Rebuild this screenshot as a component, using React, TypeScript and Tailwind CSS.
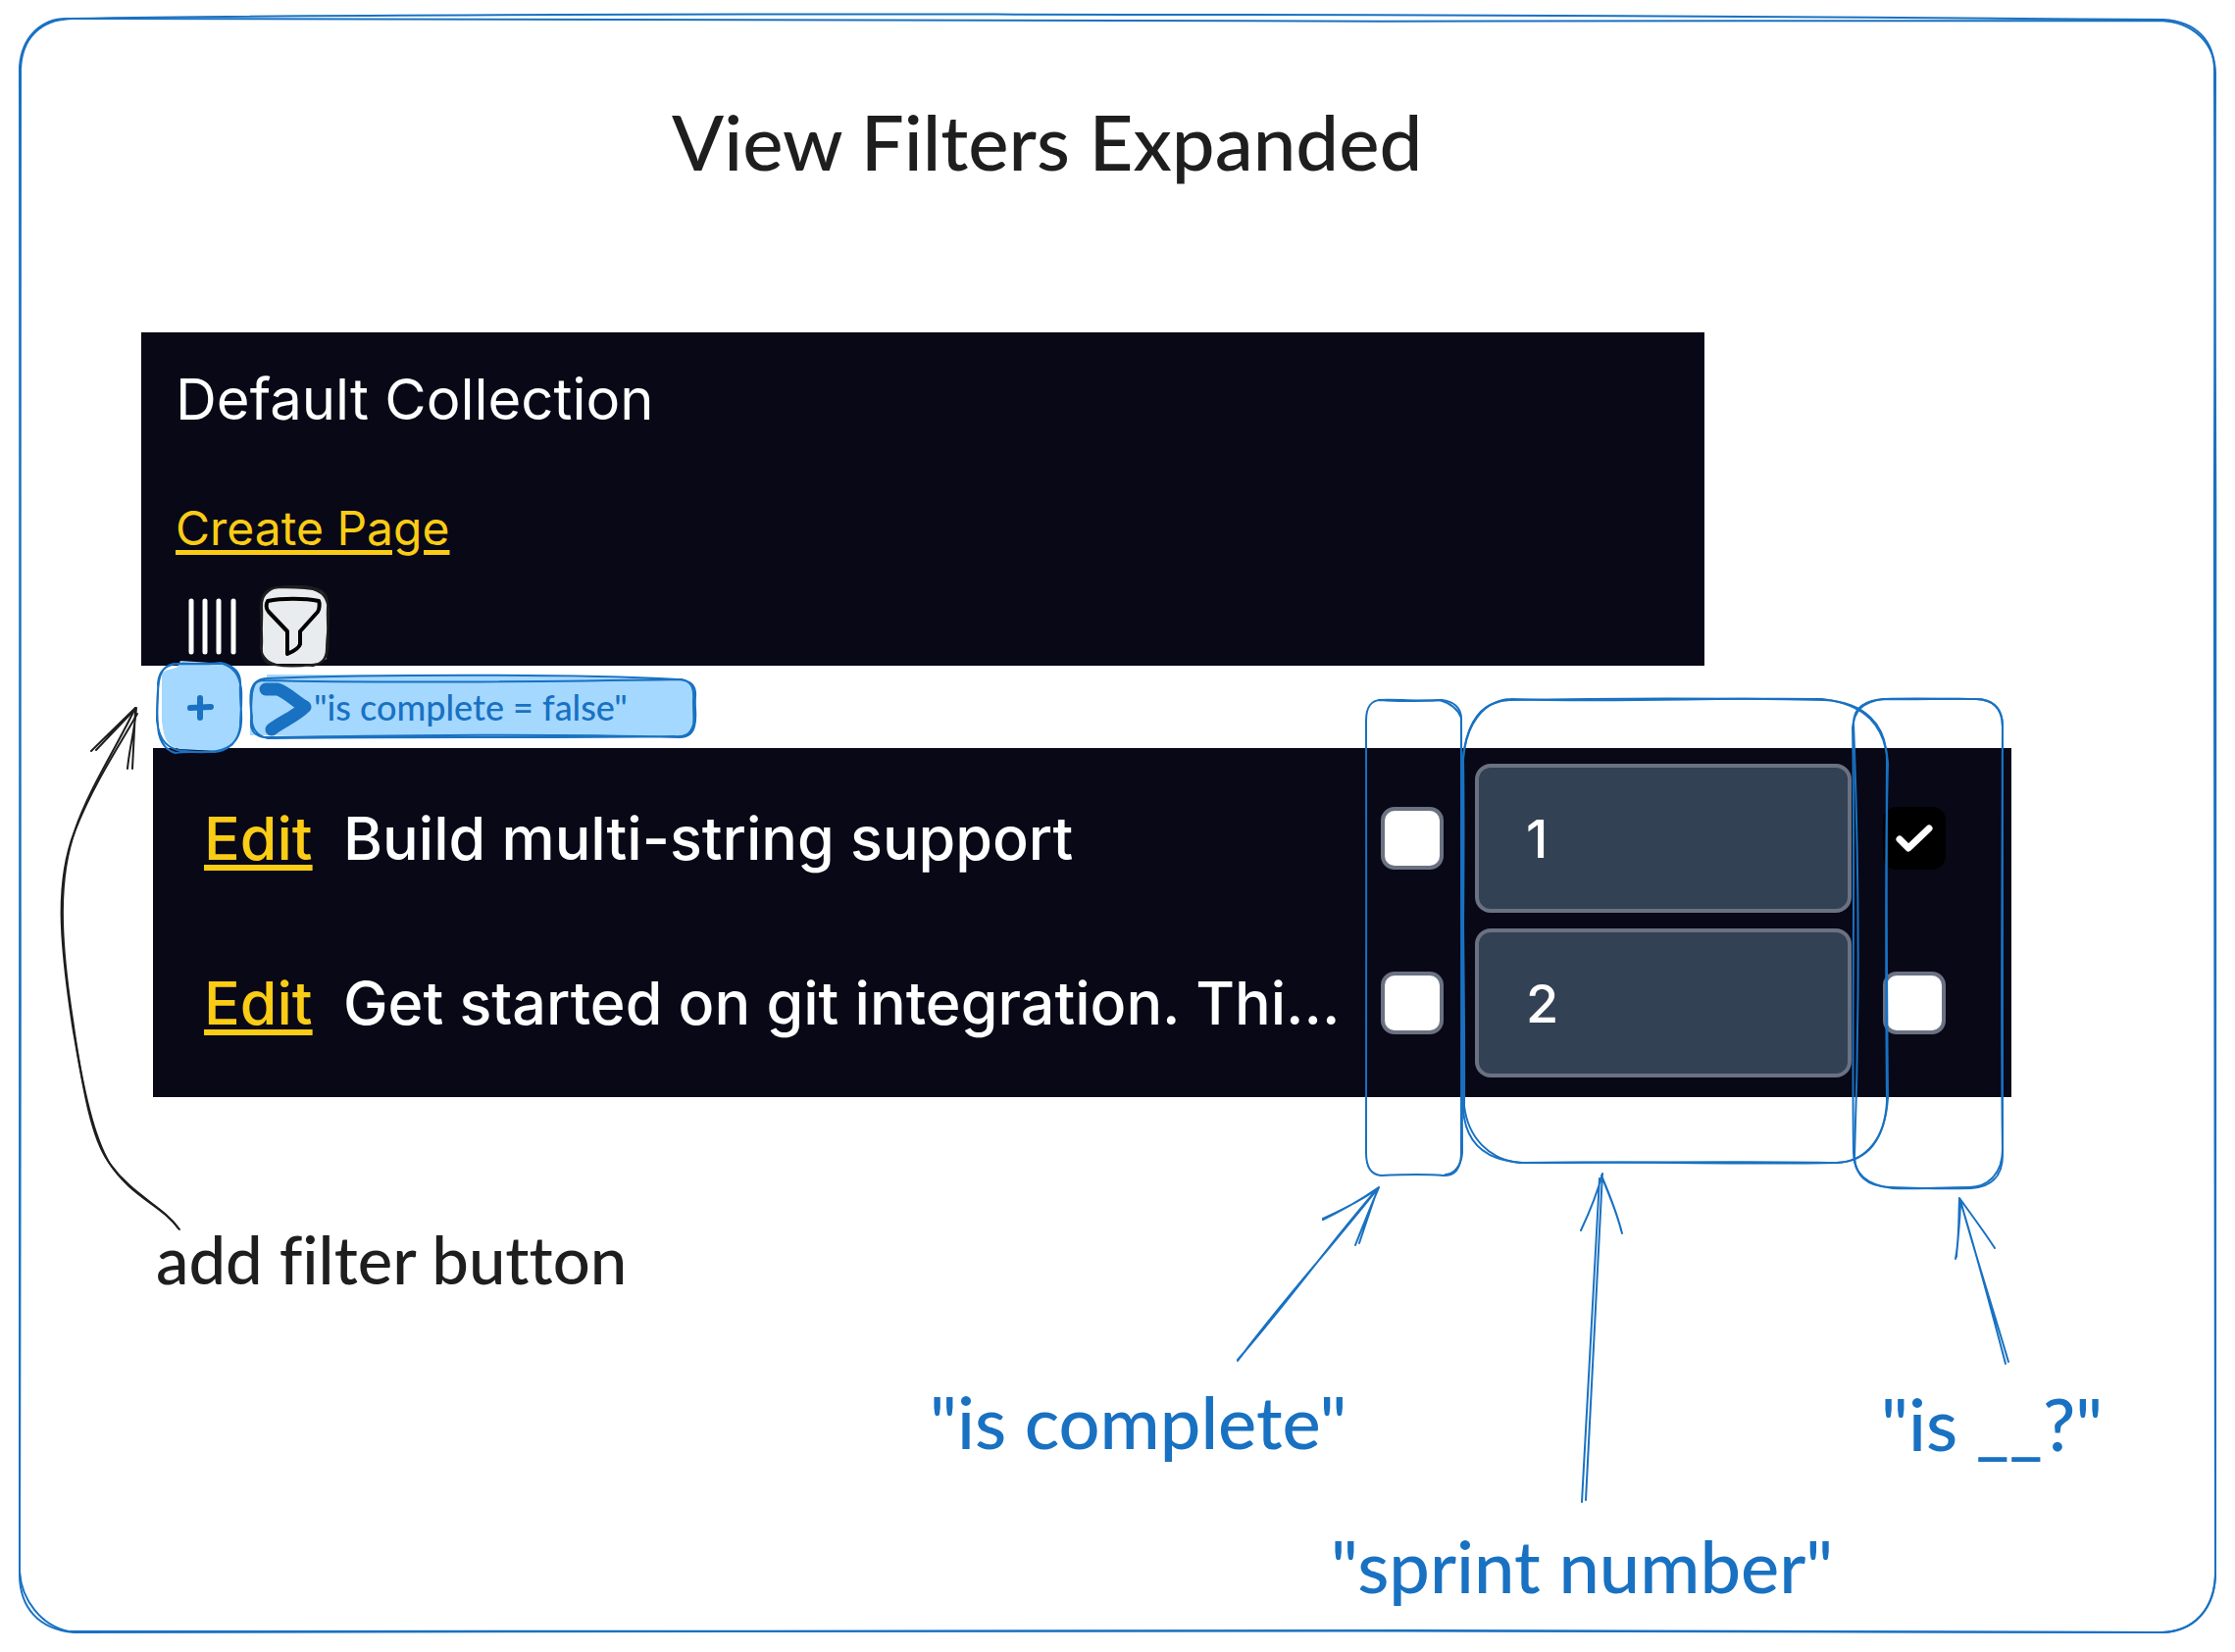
import React, { useState } from "react";

const BLUE = "#1971c2";
const INK = "#1e1e1e";

type Row = { id: string; title: string; complete: boolean; sprint: string; other: boolean };

const ROWS: Row[] = [
  { id: "build", title: "Build multi-string support", complete: false, sprint: "1", other: true },
  { id: "git", title: "Get started on git integration. Thi...", complete: false, sprint: "2", other: false },
];

function Checkbox({ label, initial }: { label: string; initial: boolean }) {
  const [checked, setChecked] = useState(initial);
  return (
    <label className="grid size-16 cursor-pointer">
      <input
        type="checkbox"
        aria-label={label}
        checked={checked}
        onChange={(e) => setChecked(e.target.checked)}
        className="col-start-1 row-start-1 size-16 appearance-none rounded-[14px] border-4 border-gray-500 bg-white checked:border-black checked:bg-black"
      />
      {checked && (
        <svg viewBox="0 0 64 64" className="pointer-events-none col-start-1 row-start-1 size-16" fill="none">
          <path d="M17 33L26 42L47 22" stroke="white" strokeWidth="7" strokeLinecap="round" strokeLinejoin="round" />
        </svg>
      )}
    </label>
  );
}

function CollectionPanel() {
  return (
    <section className="w-full max-w-[1594px] bg-[#090817] pl-[35px] pt-7">
      <h2 className="text-[58px] leading-[80px] text-white">Default Collection</h2>
      <a
        href="#create"
        className="mt-[60px] block w-fit text-[48px] leading-[64px] text-[#facc15] underline decoration-[5px] underline-offset-[5px]"
      >
        Create Page
      </a>
      <div className="mt-7 flex h-20 items-center pl-3">
        <button type="button" aria-label="Columns" className="h-[60px] w-[52px]">
          <svg viewBox="0 0 52 60" className="size-full" stroke="white" strokeWidth="5" strokeLinecap="round">
            <path d="M4 4V56M18 4V56M32 4V56M47 4V56" />
          </svg>
        </button>
        <button type="button" aria-label="Filters" className="relative ml-5 h-[84px] w-[74px]">
          <svg viewBox="0 0 74 84" className="size-full" fill="none">
            <path d="M16 3L56 3C66 5 71 11 71 22L70 75C64 79 62 80 54 80L18 80C8 79 4 76 4 64L5 22C5 10 8 5 16 3Z" fill="#e9ecef" />
            <path
              d="M16 3C30 0 48 0 58 3C68 5 72 11 71 22C70 40 73 54 71 66C70 77 64 81 54 81C42 83 28 83 17 81C7 80 3 74 4 62C5 46 2 34 3 20C4 9 8 4 16 3M18 2C32 2 48 3 56 4C66 7 70 12 72 24C73 40 70 50 70 64C70 76 64 80 56 82C44 80 28 84 19 81C8 78 4 72 3 64C3 48 5 36 4 22C3 12 8 6 18 2"
              stroke={INK}
              strokeWidth="2"
            />
            <path
              d="M10 16C24 13 48 13 62 16C63 18 63 24 61 27L43 47V60C42 64 37 67 30 70V47L11 27C8 24 8 19 10 16Z"
              stroke="black"
              strokeWidth="4"
              strokeLinejoin="round"
            />
          </svg>
        </button>
      </div>
    </section>
  );
}

function FilterBar() {
  return (
    <div className="relative flex h-[84px] items-center gap-2 pl-[15px]">
      <button type="button" aria-label="Add filter" className="-my-1 h-[96px] w-[88px]">
        <svg viewBox="0 0 88 96" className="size-full overflow-visible" fill="none">
          <path d="M25 1L70 4C82 8 86 16 86 28L87 66C86 80 76 90 62 93L24 91C12 88 8 82 6 62L6 14C12 8 19 10 22 7Z" fill="#a5d8ff" />
          <path
            d="M22 4C36 3 50 6 66 3C80 6 87 14 86 26C85 40 88 52 87 64C86 80 78 90 62 93C46 96 34 92 20 95C8 92 2 80 2 66C0 50 3 38 2 24C3 12 10 5 22 4M18 4C34 5 52 3 68 4C80 8 85 16 87 30C88 44 86 56 86 68C84 82 76 92 60 94C44 94 32 94 22 92C8 88 3 78 1 62C1 46 1 36 3 22C5 10 10 6 18 4"
            stroke={BLUE}
            strokeWidth="2"
          />
          <path d="M35 49L56 48M45 39V59" stroke={BLUE} strokeWidth="6" strokeLinecap="round" />
        </svg>
      </button>
      <button
        type="button"
        className="relative flex h-16 w-[455px] items-center text-left font-['Lato'] text-[36px] font-medium leading-[44px] text-[#1971c2]"
      >
        <svg viewBox="0 0 455 64" className="absolute inset-0 size-full overflow-visible" fill="none">
          <path d="M17 -1L250 0L444 4C452 8 454 14 454 28L453 48C450 58 446 62 440 63L0 61V20C1 8 6 4 17 3Z" fill="#a5d8ff" />
          <path
            d="M16 3C120 -1 320 -2 436 4C450 5 455 10 454 22C453 34 456 42 453 52C451 60 446 63 438 63C300 59 160 61 14 63C4 61 0 56 1 46C2 36 -1 28 1 16C3 7 8 4 16 3M12 5C140 8 320 6 440 4C450 6 453 12 452 26C452 38 453 44 452 50C449 60 444 63 432 62C300 64 140 62 18 64C6 62 1 52 2 42C0 32 2 24 2 18C4 8 6 6 12 5"
            stroke={BLUE}
            strokeWidth="2"
          />
          <path d="M16 14H28C36 16 47 27 56 32C46 42 34 46 22 55" stroke={BLUE} strokeWidth="13" strokeLinecap="round" strokeLinejoin="round" />
        </svg>
        <span className="relative pl-[65px]">&quot;is complete = false&quot;</span>
      </button>
    </div>
  );
}

function PagesTable() {
  return (
    <div className="ml-3 w-full max-w-[1895px] bg-[#090817] pb-3 pt-2">
      <table className="w-full table-fixed border-collapse text-[61px] font-medium leading-[80px] text-white">
        <colgroup>
          <col className="w-[194px]" />
          <col />
          <col className="w-[96px]" />
          <col className="w-[416px]" />
          <col className="w-[131px]" />
        </colgroup>
        <tbody>
          {ROWS.map((row) => (
            <tr key={row.id}>
              <td className="py-2 pl-[52px]">
                <a href={"#" + row.id} className="text-[#facc15] underline decoration-[6px] underline-offset-[5px]">
                  Edit
                </a>
              </td>
              <td className="whitespace-nowrap">{row.title}</td>
              <td>
                <Checkbox label={"Is complete: " + row.title} initial={row.complete} />
              </td>
              <td className="py-2">
                <input
                  type="text"
                  inputMode="numeric"
                  aria-label={"Sprint number: " + row.title}
                  defaultValue={row.sprint}
                  className="block h-[152px] w-[384px] rounded-2xl border-4 border-gray-500 bg-[#334155] px-12 text-[54px] font-medium text-white"
                />
              </td>
              <td>
                <Checkbox label={"Is blank: " + row.title} initial={row.other} />
              </td>
            </tr>
          ))}
        </tbody>
      </table>
    </div>
  );
}

function Sketches() {
  return (
    <svg
      viewBox="0 0 2279 1685"
      className="pointer-events-none absolute left-0 top-0 h-[1685px] w-[2279px]"
      fill="none"
      strokeLinecap="round"
      aria-hidden="true"
    >
      <g stroke={BLUE} strokeWidth="2">
        {/* board outline */}
        <path d="M73 19C500 12 1500 14 2206 20C2240 22 2258 42 2258 72C2262 600 2255 1200 2259 1607C2258 1640 2238 1664 2205 1665C1500 1663 700 1660 75 1665C40 1662 20 1640 20 1606C18 1100 24 500 21 71C22 40 40 20 73 19" />
        <path d="M70 19C500 26 1500 20 2202 21C2236 22 2260 44 2259 78C2256 600 2260 1200 2259 1600C2260 1642 2236 1666 2200 1665C1500 1660 700 1668 70 1664C42 1658 22 1632 20 1603C24 1100 16 500 20 68C22 38 42 18 70 19" />
        {/* completion column */}
        <path d="M1408 714C1428 716 1450 715 1470 714C1482 715 1490 722 1490 733C1491 880 1490 1040 1490 1178C1489 1192 1484 1199 1472 1199C1450 1197 1428 1198 1408 1199C1398 1198 1393 1190 1393 1176C1392 1040 1394 880 1393 735C1393 722 1398 714 1408 714" />
        <path d="M1406 714C1428 713 1450 716 1468 714C1478 717 1486 722 1490 732C1489 880 1492 1040 1491 1176C1490 1190 1482 1198 1474 1198" />
        {/* sprint column */}
        <path d="M1539 714C1640 712 1760 712 1860 714C1900 716 1924 738 1924 776C1923 900 1924 1010 1925 1120C1922 1162 1906 1184 1874 1186C1770 1184 1650 1186 1553 1186C1514 1184 1494 1166 1492 1131C1490 1010 1494 890 1492 772C1496 736 1510 716 1539 714" />
        <path d="M1541 713C1640 717 1760 711 1858 713C1902 718 1922 740 1925 778C1922 900 1923 1010 1924 1124C1922 1160 1904 1185 1872 1186C1770 1188 1650 1184 1550 1186C1518 1183 1497 1160 1493 1128C1494 1010 1490 890 1492 776C1494 740 1512 714 1541 713" />
        {/* last column */}
        <path d="M1922 713C1950 712 1990 713 2016 713C2034 714 2042 724 2042 741C2041 890 2041 1040 2042 1178C2042 1200 2030 1211 2010 1212C1980 1213 1952 1212 1927 1211C1904 1210 1892 1200 1891 1180C1896 1040 1896 890 1890 738C1890 722 1902 714 1922 713" />
        <path d="M1920 713C1950 714 1990 712 2014 713C2032 713 2043 722 2042 745C2042 890 2040 1040 2042 1172C2042 1198 2026 1211 2008 1211C1980 1211 1952 1213 1930 1212C1902 1209 1890 1196 1890 1176C1888 1040 1892 890 1889 742C1891 724 1900 716 1920 713" />
        {/* note arrows */}
        <path d="M1262 1388C1308 1326 1358 1272 1406 1211M1262 1387C1312 1330 1356 1268 1405 1212M1406 1211C1390 1222 1366 1236 1349 1244M1404 1213C1386 1226 1368 1234 1349 1243M1406 1211C1398 1230 1390 1250 1382 1270M1405 1212C1398 1232 1392 1250 1386 1268" />
        <path d="M1613 1532L1631 1202M1617 1530L1634 1197M1634 1197C1628 1220 1620 1238 1612 1255M1633 1199C1641 1218 1649 1238 1654 1258M1634 1202C1642 1222 1650 1240 1653 1255" />
        <path d="M2045 1391C2030 1334 2016 1280 1998 1222M2048 1389C2032 1334 2014 1280 1999 1224M1998 1222C1997 1244 1998 1264 1994 1284M1999 1224C1999 1244 1996 1266 1995 1282M1998 1222C2011 1240 2023 1256 2034 1273" />
      </g>
      <g stroke={INK} strokeWidth="2">
        <path d="M183 1254C164 1228 134 1222 110 1184C92 1158 84 1104 74 1046C61 960 56 900 76 848C91 804 118 764 138 722" />
        <path d="M182 1253C166 1230 136 1220 112 1187C94 1158 82 1098 74 1040C61 956 59 894 77 846C95 800 122 760 140 728" />
        <path d="M138 722L93 766M137 724L98 765M139 722C138 742 132 762 130 784M138 724C137 744 136 764 135 784" />
      </g>
    </svg>
  );
}

function Note({ className, children }: { className: string; children: React.ReactNode }) {
  return <p className={"absolute whitespace-nowrap font-['Lato'] font-medium [font-variant-ligatures:none] " + className}>{children}</p>;
}

export default function App() {
  return (
    <main className="relative min-h-screen w-full overflow-hidden bg-white pl-36 font-['Inter',sans-serif]">
      <h1 className="h-[339px] pl-[541px] pt-24 font-['Lato'] text-[78px] font-medium leading-[96px] text-[#1e1e1e]">
        View Filters Expanded
      </h1>
      <CollectionPanel />
      <FilterBar />
      <PagesTable />
      <Sketches />
      <Note className="left-[159px] top-[1244px] text-[67px] leading-[80px] text-[#1e1e1e]">add filter button</Note>
      <Note className="left-[948px] top-[1406px] text-[74px] leading-[88px] text-[#1971c2]">&quot;is complete&quot;</Note>
      <Note className="left-[1357px] top-[1553px] text-[74px] leading-[88px] text-[#1971c2]">&quot;sprint number&quot;</Note>
      <Note className="left-[1918px] top-[1408px] text-[74px] leading-[88px] text-[#1971c2]">&quot;is __?&quot;</Note>
    </main>
  );
}
